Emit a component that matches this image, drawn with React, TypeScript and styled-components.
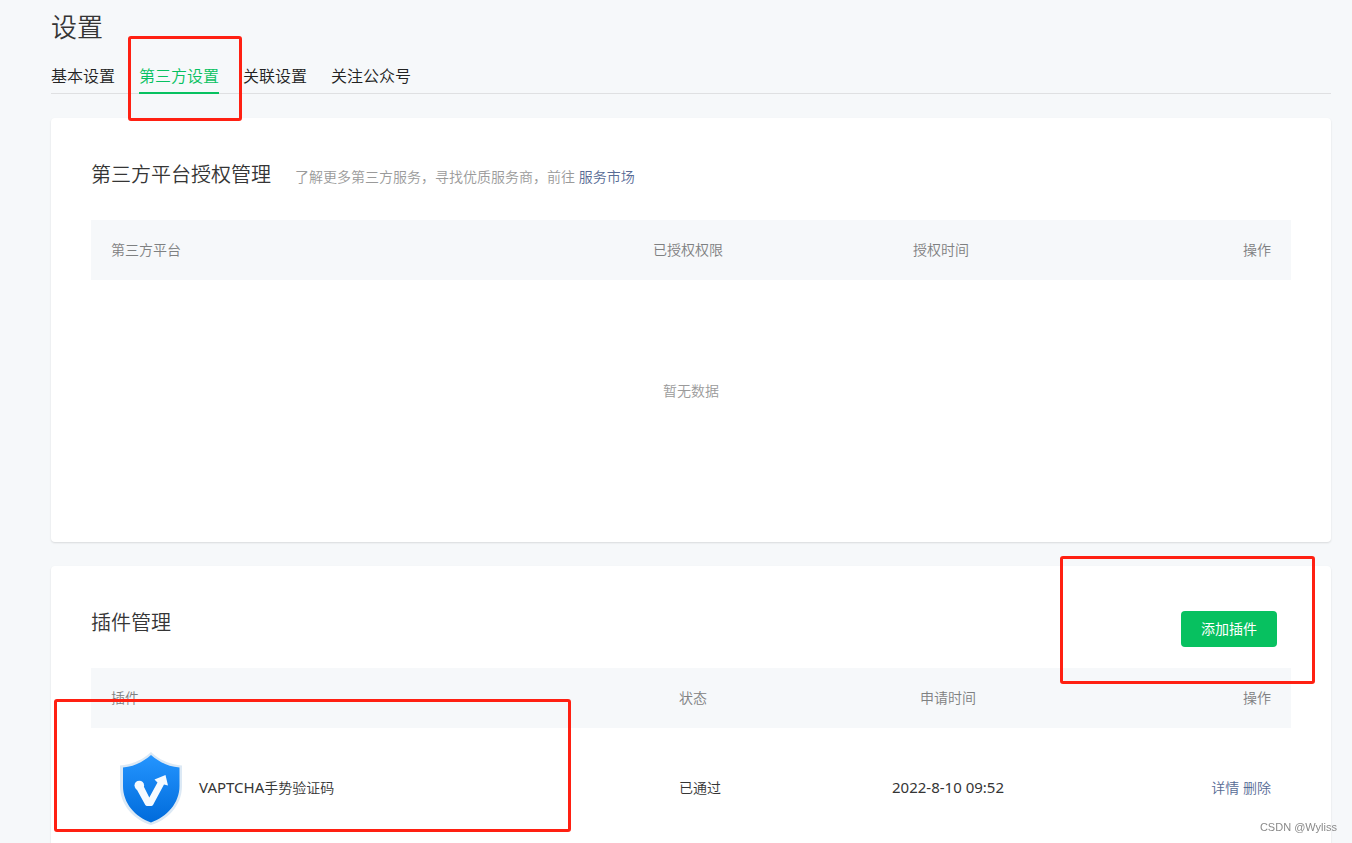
import React from 'react';
import styled, { createGlobalStyle, css } from 'styled-components';

const GlobalStyle = createGlobalStyle`
  * { box-sizing: border-box; }
  body {
    margin: 0;
    background: #f6f8fa;
    color: #353535;
    font-family: "Noto Sans", "Noto Sans CJK SC", sans-serif;
    font-size: 14px;
    font-weight: 350;
    line-height: 20px;
  }
`;

const Page = styled.main`
  height: 100vh;
  overflow-y: auto;
  scrollbar-width: none;
  padding: 0 21px 24px 51px;
`;

const PageTitle = styled.h1`
  margin: 0;
  font-size: 26px;
  font-weight: 350;
  line-height: 54px;
`;

const Tabs = styled.nav`
  display: flex;
  gap: 24px;
  border-bottom: 1px solid #dfe0e2;
`;

const Tab = styled.a<{ $active?: boolean }>`
  position: relative;
  margin-bottom: -1px;
  padding-top: 6px;
  border-bottom: 2px solid ${(p) => (p.$active ? '#07c160' : 'transparent')};
  color: ${(p) => (p.$active ? '#07c160' : '#222')};
  font-size: 16px;
  line-height: 32px;
  text-decoration: none;
`;

const Highlight = styled.span<{ $inset: string }>`
  position: absolute;
  inset: ${(p) => p.$inset};
  z-index: 1;
  border: 3px solid #ff2012;
  border-radius: 3px;
  pointer-events: none;
`;

const Card = styled.section`
  margin-top: 24px;
  padding: 40px;
  border-radius: 4px;
  background: #fff;
  box-shadow: 0 1px 2px rgba(0, 0, 0, 0.12);
`;

const CardHead = styled.header`
  display: flex;
  justify-content: space-between;
  align-items: flex-start;
  height: 62px;
`;

const Heading = styled.div`
  display: flex;
  align-items: baseline;
  gap: 24px;
`;

const CardTitle = styled.h2`
  margin: 0;
  font-size: 20px;
  font-weight: 350;
  line-height: 34px;
`;

const Hint = styled.p`
  margin: 0;
  color: #9a9a9a;
`;

const Link = styled.a`
  color: #576b95;
  text-decoration: none;
`;

const ButtonArea = styled.div`
  position: relative;
  margin: 5px 14px 0 0;
`;

const PrimaryButton = styled.button`
  display: block;
  width: 96px;
  height: 36px;
  padding: 0;
  border: 0;
  border-radius: 4px;
  background: #07c160;
  color: #fff;
  font: inherit;
  font-weight: 400;
`;

const Table = styled.table`
  width: 100%;
  table-layout: fixed;
  border-collapse: collapse;
`;

const Col = styled.col<{ $width?: number }>`
  ${(p) => p.$width && css`width: ${p.$width}px;`}
`;

type Align = 'left' | 'center' | 'right';

const HeadCell = styled.th<{ $align?: Align }>`
  height: 60px;
  padding: 0 20px;
  background: #f6f8fa;
  color: #7e8081;
  font-weight: 350;
  text-align: ${(p) => p.$align ?? 'left'};
`;

const Cell = styled.td<{ $align?: Align }>`
  position: relative;
  height: 120px;
  padding: 0 20px;
  text-align: ${(p) => p.$align ?? 'left'};
`;

const EmptyCell = styled.td`
  height: 222px;
  padding: 0;
  color: #9a9a9a;
  text-align: center;
`;

const Plugin = styled.div`
  display: flex;
  align-items: center;
  gap: 8px;
`;

const Latin = styled.span`
  font-size: 15px;
  font-weight: 400;
  line-height: 18px;
`;

const Watermark = styled.div`
  position: fixed;
  right: 15px;
  bottom: 8px;
  color: #8a8a8a;
  font-family: "Liberation Sans", sans-serif;
  font-size: 11px;
  line-height: 16px;
`;

const ShieldLogo = () => (
  <svg width="80" height="80" viewBox="0 0 80 80" aria-hidden="true">
    <defs>
      <linearGradient id="shield" x1="0" y1="0" x2="0" y2="1">
        <stop offset="0" stopColor="#2495ff" />
        <stop offset="1" stopColor="#006bdb" />
      </linearGradient>
    </defs>
    <path
      d="M40 4C47 11 57 16 71 17.5V38C71 57 57 72 40 77C23 72 9 57 9 38V17.5C23 16 33 11 40 4Z"
      fill="#dce9f5"
    />
    <path
      d="M40 7C48 14 57 18.500 68.500 19.500V38C68.500 55 56 69 40 74.500C24 69 12 55 12 38V19.500C23 18.500 32 14 40 7Z"
      fill="url(#shield)"
    />
    <circle cx="28.300" cy="37.500" r="4.800" fill="#f5faff" />
    <path
      d="M25.500 41L32.500 38L38.300 49.500L46.500 34.500L43.500 31.500L54.500 27L57 37.500L53 36.500L42 57Q41.300 58 40.300 58H36Q35 58 34.300 57Z"
      fill="#f5faff"
    />
  </svg>
);

export default function App() {
  return (
    <>
      <GlobalStyle />
      <Page>
        <PageTitle>设置</PageTitle>
        <Tabs>
          <Tab href="#basic">基本设置</Tab>
          <Tab href="#third-party" $active aria-current="page">
            第三方设置
            <Highlight $inset="-18px -23px -29px -11px" />
          </Tab>
          <Tab href="#related">关联设置</Tab>
          <Tab href="#follow">关注公众号</Tab>
        </Tabs>

        <Card>
          <CardHead>
            <Heading>
              <CardTitle>第三方平台授权管理</CardTitle>
              <Hint>
                了解更多第三方服务，寻找优质服务商，前往 <Link href="#market">服务市场</Link>
              </Hint>
            </Heading>
          </CardHead>
          <Table>
            <colgroup>
              <Col />
              <Col $width={178} />
              <Col $width={260} />
              <Col $width={220} />
            </colgroup>
            <thead>
              <tr>
                <HeadCell>第三方平台</HeadCell>
                <HeadCell>已授权权限</HeadCell>
                <HeadCell $align="center">授权时间</HeadCell>
                <HeadCell $align="right">操作</HeadCell>
              </tr>
            </thead>
            <tbody>
              <tr>
                <EmptyCell colSpan={4}>暂无数据</EmptyCell>
              </tr>
            </tbody>
          </Table>
        </Card>

        <Card>
          <CardHead>
            <CardTitle>插件管理</CardTitle>
            <ButtonArea>
              <PrimaryButton type="button">添加插件</PrimaryButton>
              <Highlight $inset="-55px -38px -37px -121px" />
            </ButtonArea>
          </CardHead>
          <Table>
            <colgroup>
              <Col />
              <Col $width={170} />
              <Col $width={238} />
              <Col $width={224} />
            </colgroup>
            <thead>
              <tr>
                <HeadCell>插件</HeadCell>
                <HeadCell>状态</HeadCell>
                <HeadCell $align="center">申请时间</HeadCell>
                <HeadCell $align="right">操作</HeadCell>
              </tr>
            </thead>
            <tbody>
              <tr>
                <Cell>
                  <Plugin>
                    <ShieldLogo />
                    <span>
                      <Latin>VAPTCHA</Latin>手势验证码
                    </span>
                  </Plugin>
                  <Highlight $inset="-29px 88px 16px -37px" />
                </Cell>
                <Cell>已通过</Cell>
                <Cell $align="center">
                  <Latin>2022-8-10 09:52</Latin>
                </Cell>
                <Cell $align="right">
                  <Link href="#detail">详情</Link> <Link href="#delete">删除</Link>
                </Cell>
              </tr>
            </tbody>
          </Table>
        </Card>
      </Page>
      <Watermark>CSDN @Wyliss</Watermark>
    </>
  );
}
